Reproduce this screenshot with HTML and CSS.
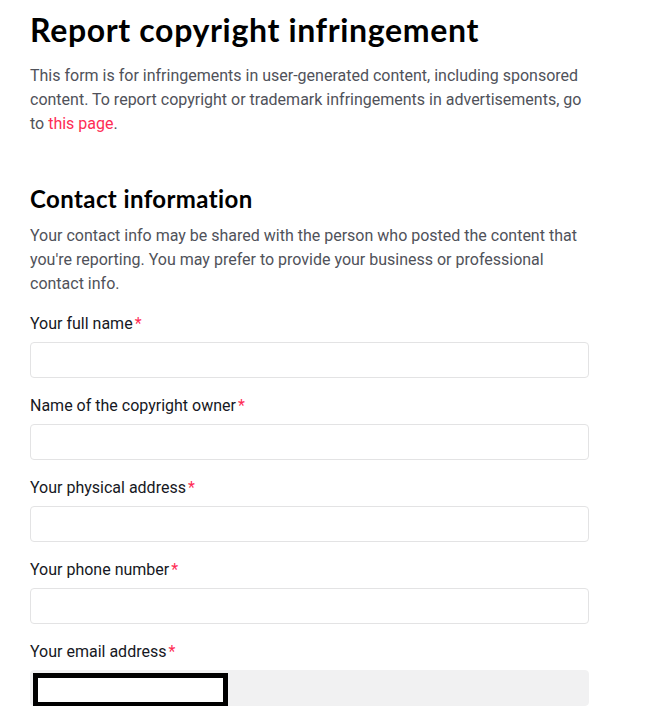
FILE: index.html
```html
<!DOCTYPE html>
<html lang="en">
<head>
<meta charset="utf-8">
<title>Report copyright infringement</title>
<link rel="stylesheet" href="styles.css">
</head>
<body>
<main class="page">
  <h1 class="title">Report copyright infringement</h1>
  <p class="intro">This form is for infringements in user-generated content, including sponsored content. To report copyright or trademark infringements in advertisements, go to <a class="link" href="#">this page</a>.</p>

  <section class="section">
    <h2 class="section-title">Contact information</h2>
    <p class="section-desc">Your contact info may be shared with the person who posted the content that you're reporting. You may prefer to provide your business or professional contact info.</p>

    <div class="field">
      <label class="label">Your full name<span class="req">*</span></label>
      <input class="input" type="text">
    </div>
    <div class="field">
      <label class="label">Name of the copyright owner<span class="req">*</span></label>
      <input class="input" type="text">
    </div>
    <div class="field">
      <label class="label">Your physical address<span class="req">*</span></label>
      <input class="input" type="text">
    </div>
    <div class="field">
      <label class="label">Your phone number<span class="req">*</span></label>
      <input class="input" type="text">
    </div>
    <div class="field">
      <label class="label">Your email address<span class="req">*</span></label>
      <div class="input input-disabled"><span class="redact"></span></div>
    </div>
  </section>
</main>
</body>
</html>
```

FILE: styles.css
```css
html, body {
  margin: 0;
  padding: 0;
  background: #ffffff;
}
body {
  font-family: Roboto, "Liberation Sans", Arial, sans-serif;
  color: #161823;
}
.page {
  padding: 10px 0 0 30px;
  width: 559px;
}
.title {
  margin: 0;
  font-family: Lato, "DejaVu Sans", sans-serif;
  font-weight: 700;
  font-size: 32px;
  line-height: 40px;
  letter-spacing: 0.65px;
  color: #000000;
}
.intro {
  margin: 14px 0 0 0;
  font-size: 16px;
  line-height: 24px;
  color: #50525a;
}
.link {
  color: #fe2c55;
  text-decoration: none;
}
.section {
  margin-top: 49px;
}
.section-title {
  margin: 0;
  font-family: Lato, "DejaVu Sans", sans-serif;
  font-weight: 700;
  font-size: 24px;
  line-height: 28px;
  letter-spacing: 0.4px;
  color: #000000;
}
.section-desc {
  margin: 11px 0 0 0;
  font-size: 16px;
  line-height: 24px;
  color: #50525a;
}
.field {
  display: flex;
  flex-direction: column;
  margin-top: 16px;
}
.label {
  font-size: 16px;
  line-height: 24px;
  color: #161823;
  margin-bottom: 6px;
}
.req {
  color: #fe2c55;
  margin-left: 2px;
}
.input {
  box-sizing: border-box;
  width: 559px;
  height: 36px;
  border: 1px solid #e3e3e4;
  border-radius: 4px;
  background: #ffffff;
  margin: 0;
  padding: 0 12px;
  font: inherit;
}
.input-disabled {
  background: #f1f1f2;
  border-color: #f1f1f2;
  padding: 2px 0 0 2px;
}
.redact {
  display: block;
  box-sizing: border-box;
  width: 195px;
  height: 34px;
  border: 5px solid #000000;
  background: #ffffff;
}
```
